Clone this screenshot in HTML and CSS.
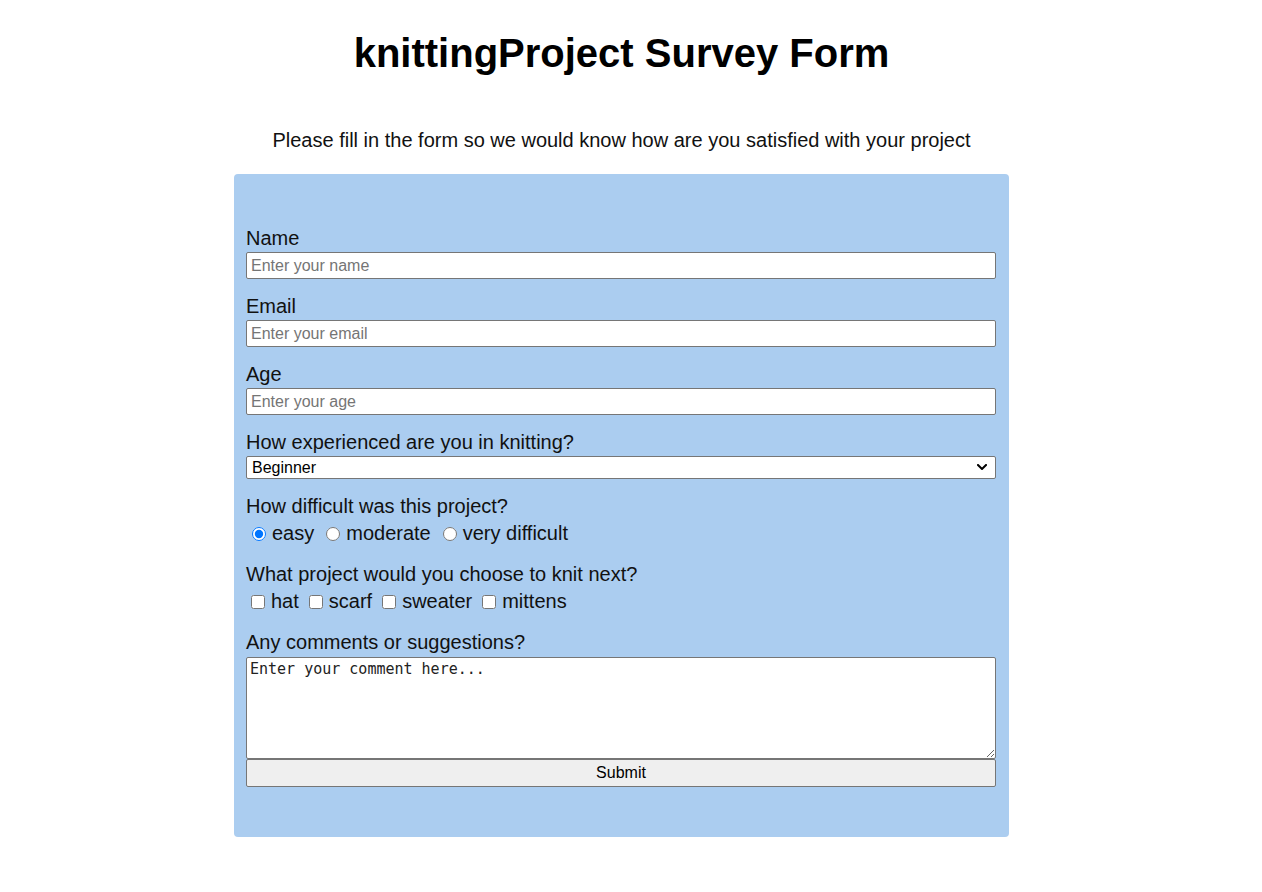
FILE: index.html
```html
<!DOCTYPE html>
<html lang="en">
<head>
<meta charset="utf-8">
<title>knittingProject Survey Form</title>
<link rel="stylesheet" href="styles.css">
</head>
<body>
<div class="page">
  <h1 id="title">knittingProject Survey Form</h1>
  <p id="description">Please fill in the form so we would know how are you satisfied with your project</p>
  <form id="survey-form" class="survey">
    <div class="field">
      <label for="name" class="label">Name</label>
      <input id="name" class="text-input" type="text" placeholder="Enter your name">
    </div>
    <div class="field">
      <label for="email" class="label">Email</label>
      <input id="email" class="text-input" type="email" placeholder="Enter your email">
    </div>
    <div class="field">
      <label for="number" class="label">Age</label>
      <input id="number" class="text-input" type="number" placeholder="Enter your age">
    </div>
    <div class="field">
      <label for="dropdown" class="label">How experienced are you in knitting?</label>
      <div class="select-wrap">
        <select id="dropdown" class="select">
          <option>Beginner</option>
          <option>Intermediate</option>
          <option>Advanced</option>
        </select>
        <svg class="chevron" width="10" height="6" viewBox="0 0 10 6" aria-hidden="true">
          <path d="M1 1 L5 5 L9 1" fill="none" stroke="#000" stroke-width="2" stroke-linecap="square"/>
        </svg>
      </div>
    </div>
    <div class="field">
      <p class="label">How difficult was this project?</p>
      <div class="choices radios">
        <label class="choice"><input class="radio" type="radio" name="difficulty" value="easy" checked>easy</label>
        <label class="choice"><input class="radio" type="radio" name="difficulty" value="moderate">moderate</label>
        <label class="choice"><input class="radio" type="radio" name="difficulty" value="very difficult">very difficult</label>
      </div>
    </div>
    <div class="field">
      <p class="label">What project would you choose to knit next?</p>
      <div class="choices checks">
        <label class="choice"><input class="check" type="checkbox" value="hat">hat</label>
        <label class="choice"><input class="check" type="checkbox" value="scarf">scarf</label>
        <label class="choice"><input class="check" type="checkbox" value="sweater">sweater</label>
        <label class="choice"><input class="check" type="checkbox" value="mittens">mittens</label>
      </div>
    </div>
    <div class="field">
      <label for="comments" class="label">Any comments or suggestions?</label>
      <textarea id="comments" class="textarea" placeholder="Enter your comment here..."></textarea>
      <button id="submit" type="submit" class="submit">Submit</button>
    </div>
  </form>
</div>
</body>
</html>
```
FILE: styles.css
```css
html, body {
  background: #ffffff;
}
body {
  margin: 8px 27px 8px 8px;
  font-family: "Liberation Sans", Arial, sans-serif;
  color: #000;
}
.page {
  display: flex;
  flex-direction: column;
  align-items: center;
}
#title {
  font-size: 40px;
  font-weight: bold;
  margin: 24px 0 0 0;
  line-height: 42px;
}
#description {
  font-size: 20px;
  margin: 55px 0 22px 0;
  line-height: 23px;
  color: #111;
}
.survey {
  box-sizing: border-box;
  width: 775px;
  background: #abcdf0;
  border-radius: 4px;
  padding: 53px 13px 50px 12px;
  display: flex;
  flex-direction: column;
  gap: 16px;
}
.field {
  display: flex;
  flex-direction: column;
}
.label {
  font-size: 20px;
  line-height: 23px;
  margin: 0 0 2px 0;
  color: #111;
}
.text-input {
  box-sizing: border-box;
  height: 27px;
  width: 100%;
  margin: 0;
  border: 1px solid #767676;
  border-radius: 2px;
  padding: 1px 4px;
  font-family: "Liberation Sans", Arial, sans-serif;
  font-size: 16px;
  background: #fff;
}
.text-input::placeholder {
  color: #757575;
}
.select-wrap {
  position: relative;
  display: flex;
}
.select {
  box-sizing: border-box;
  height: 23px;
  width: 100%;
  margin: 0;
  border: 1px solid #767676;
  border-radius: 2px;
  padding: 0 24px 0 5px;
  font-family: "Liberation Sans", Arial, sans-serif;
  font-size: 16px;
  background: #fff;
  color: #000;
  appearance: none;
  -webkit-appearance: none;
}
.chevron {
  position: absolute;
  right: 9px;
  top: 8px;
  pointer-events: none;
}
.choices {
  display: flex;
  flex-direction: row;
  font-size: 20px;
  line-height: 23px;
  padding: 2px 0 2px 0;
}
.radios {
  gap: 6px;
}
.checks {
  gap: 5px;
}
.choice {
  display: flex;
  align-items: center;
  color: #111;
}
.radio {
  margin: 0 6px 0 6px;
  width: 14px;
  height: 14px;
}
.check {
  margin: 0 6px 0 5px;
  width: 14px;
  height: 14px;
}
.textarea {
  box-sizing: border-box;
  width: 100%;
  height: 102px;
  margin: 1px 0 0 0;
  border: 1px solid #767676;
  border-radius: 2px;
  padding: 2px 3px;
  font-family: "DejaVu Sans Mono", "Liberation Mono", monospace;
  font-size: 15px;
  resize: both;
  background: #fff;
}
.textarea::placeholder {
  color: #222;
}
.submit {
  box-sizing: border-box;
  width: 100%;
  height: 28px;
  margin: 0;
  border: 1px solid #767676;
  border-radius: 2px;
  background: #efefef;
  font-family: "Liberation Sans", Arial, sans-serif;
  font-size: 16px;
  color: #000;
}
```
